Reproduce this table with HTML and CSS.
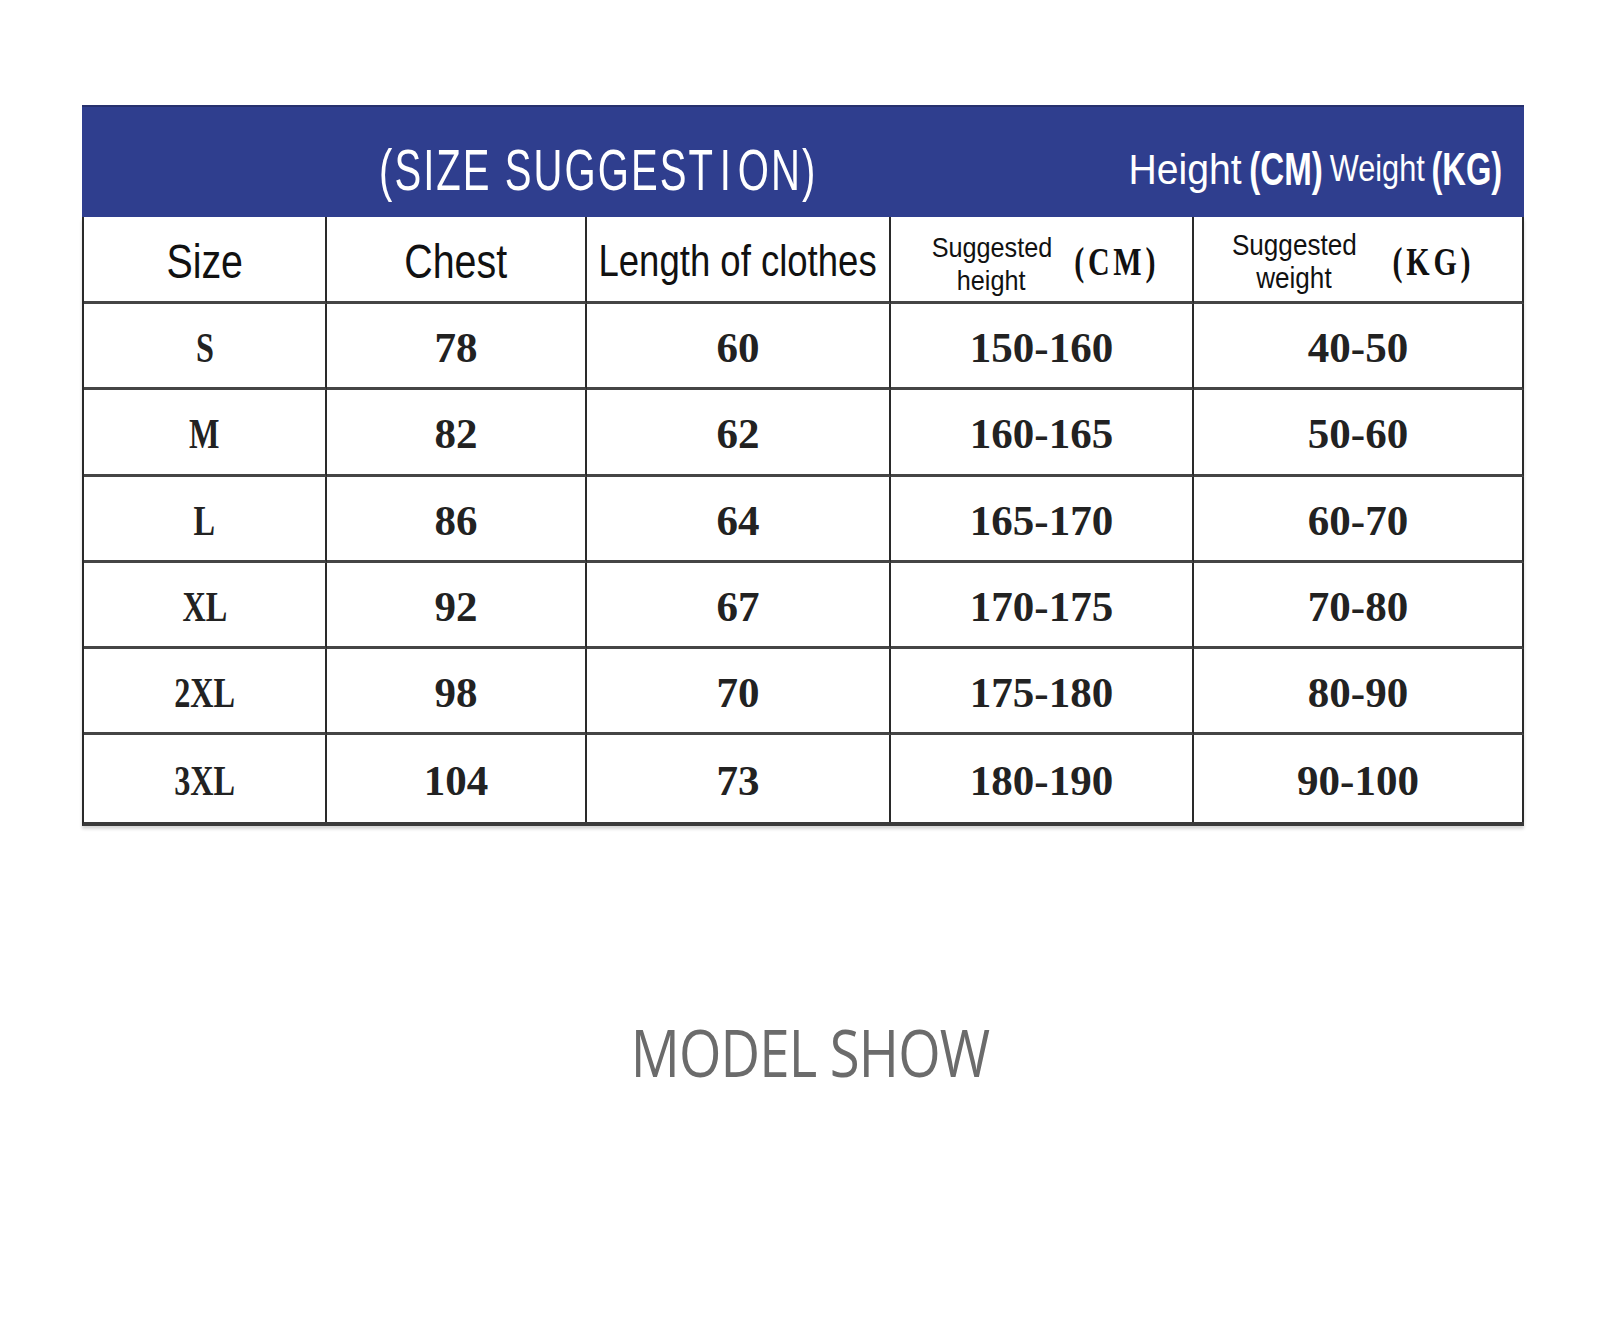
FILE: index.html
```html
<!DOCTYPE html>
<html lang="en">
<head>
<meta charset="utf-8">
<title>Size Suggestion</title>
<link rel="stylesheet" href="styles.css">
</head>
<body>
<main class="page">
  <section class="sheet">
    <div class="banner">
      <span class="title">(SIZE SUGGEST<span class="i">I</span>ON)</span>
      <span class="units">
        <span class="u u-h"><span class="t">Height</span></span>
        <span class="u u-cm"><span class="t">(CM)</span></span>
        <span class="u u-w"><span class="t">Weight</span></span>
        <span class="u u-kg"><span class="t">(KG)</span></span>
      </span>
    </div>
    <div class="grid">
      <div class="cell head"><span class="lbl">Size</span></div>
      <div class="cell head"><span class="lbl">Chest</span></div>
      <div class="cell head"><span class="lbl lbl-long">Length of clothes</span></div>
      <div class="cell head pair pair-h">
        <span class="stack"><span class="ln">Suggested</span><span class="ln">height</span></span>
        <span class="unit"><span class="ut">(CM)</span></span>
      </div>
      <div class="cell head pair pair-w">
        <span class="stack"><span class="ln">Suggested</span><span class="ln">weight</span></span>
        <span class="unit"><span class="ut">(KG)</span></span>
      </div>

      <div class="cell num"><span class="sz">S</span></div><div class="cell num">78</div><div class="cell num">60</div><div class="cell num">150-160</div><div class="cell num">40-50</div>
      <div class="cell num"><span class="sz">M</span></div><div class="cell num">82</div><div class="cell num">62</div><div class="cell num">160-165</div><div class="cell num">50-60</div>
      <div class="cell num"><span class="sz">L</span></div><div class="cell num">86</div><div class="cell num">64</div><div class="cell num">165-170</div><div class="cell num">60-70</div>
      <div class="cell num"><span class="sz">XL</span></div><div class="cell num">92</div><div class="cell num">67</div><div class="cell num">170-175</div><div class="cell num">70-80</div>
      <div class="cell num"><span class="sz">2XL</span></div><div class="cell num">98</div><div class="cell num">70</div><div class="cell num">175-180</div><div class="cell num">80-90</div>
      <div class="cell num"><span class="sz">3XL</span></div><div class="cell num">104</div><div class="cell num">73</div><div class="cell num">180-190</div><div class="cell num">90-100</div>
    </div>
  </section>
  <h2 class="model"><span class="model-text">MODEL SHOW</span></h2>
</main>
</body>
</html>
```

FILE: styles.css
```css
html, body {
  margin: 0;
  padding: 0;
  background: #ffffff;
}

.page {
  width: 1600px;
  height: 1340px;
  overflow: hidden;
  font-family: "Liberation Sans", Arial, sans-serif;
}

.sheet {
  margin: 105px 0 0 82px;
  width: 1442px;
}

/* ---------- blue banner ---------- */
.banner {
  height: 112px;
  background: #2f3e8e;
  border-top: 2px solid #27316e;
  box-sizing: border-box;
  display: flex;
  align-items: center;
  color: #ffffff;
  padding: 14px 22px 0 297px;
}

.title {
  display: inline-block;
  white-space: nowrap;
  font-family: "Liberation Sans", sans-serif;
  font-size: 58px;
  letter-spacing: 3px;
  transform: scaleX(0.69);
  transform-origin: left center;
}

.title .i {
  margin: 0 7px;
}

.units {
  margin-left: auto;
  display: flex;
  align-items: center;
}

.u {
  display: flex;
  justify-content: center;
  white-space: nowrap;
}

.u .t {
  display: inline-block;
}

.u-h { width: 113px; }
.u-cm { width: 74px; margin-left: 7px; }
.u-w { width: 96px; margin-left: 6px; }
.u-kg { width: 71px; margin-left: 6px; }

.u-h .t {
  font-size: 43px;
  transform: scaleX(0.91);
}

.u-w .t {
  font-size: 37px;
  transform: scaleX(0.83);
}

.u-cm .t,
.u-kg .t {
  font-size: 46px;
  font-weight: bold;
}

.u-cm .t { transform: scaleX(0.72); }
.u-kg .t { transform: scaleX(0.71); }

/* ---------- table ---------- */
.grid {
  display: grid;
  grid-template-columns: 243px 260px 304px 303px 330px;
  grid-template-rows: 87px repeat(6, 86.3px);
  border-left: 2px solid #2a2a2a;
  border-bottom: 4px solid #3a3a3a;
  box-shadow: 0 3px 3px rgba(0, 0, 0, 0.16);
}

.cell {
  display: flex;
  align-items: center;
  justify-content: center;
  border-right: 2px solid #2a2a2a;
  border-bottom: 3px solid #454545;
  color: #111111;
  white-space: nowrap;
}

.grid .cell:nth-last-child(-n+5) {
  border-bottom: none;
}

.head {
  font-family: "Liberation Sans", sans-serif;
  padding-top: 4px;
}

.lbl {
  display: inline-block;
  font-size: 48px;
  transform: scaleX(0.82);
}

.lbl-long {
  font-size: 44px;
  transform: scaleX(0.83);
}

.pair {
  display: grid;
  align-items: center;
  justify-content: center;
  padding-top: 0;
}

.pair-h {
  grid-template-columns: 121px 80px;
  column-gap: 25px;
  padding-left: 5px;
}

.pair-w {
  grid-template-columns: 126px 81px;
  column-gap: 36px;
  padding-right: 11px;
}

.stack {
  display: flex;
  flex-direction: column;
  align-items: center;
  line-height: 33px;
}

.pair-h .stack { margin-top: 10px; }
.pair-w .stack { margin-top: 6px; }

.ln {
  display: inline-block;
  font-size: 28px;
  transform: scaleX(0.9);
}

.pair-w .ln {
  font-size: 29px;
}

.unit {
  display: flex;
  justify-content: center;
  padding-top: 4px;
}

.ut {
  display: inline-block;
  font-family: "Liberation Serif", serif;
  font-weight: bold;
  font-size: 40px;
  letter-spacing: 5px;
  transform: scaleX(0.75);
}

.num {
  font-family: "Liberation Serif", serif;
  font-weight: bold;
  font-size: 43px;
  color: #222222;
  padding-top: 4px;
}

.sz {
  display: inline-block;
  transform: scaleX(0.75);
}

/* ---------- footer caption ---------- */
.model {
  margin: 190px 0 0 0;
  padding-left: 20px;
  text-align: center;
  font-weight: 500;
  font-size: 66px;
  line-height: 70px;
  color: #6b6b6b;
  font-family: "Open Sans", sans-serif;
}

.model-text {
  display: inline-block;
  transform: scaleX(0.826);
  letter-spacing: -1px;
}
```
